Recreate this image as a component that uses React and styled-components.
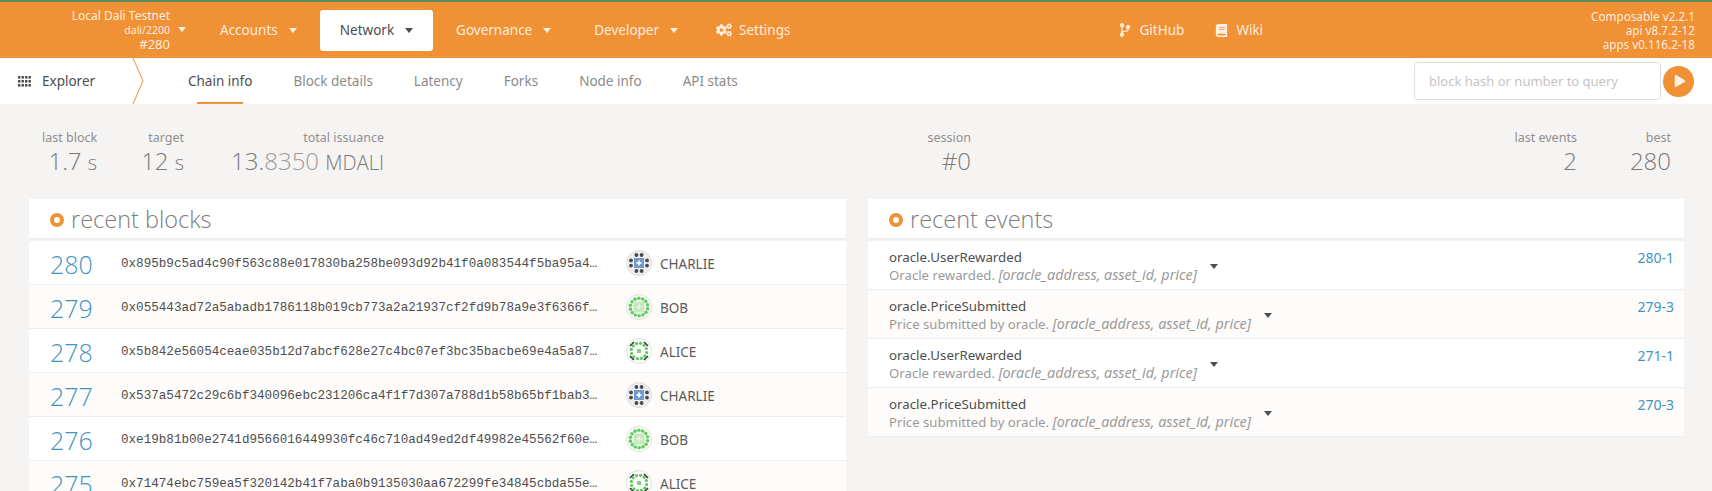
import styled, { createGlobalStyle } from "styled-components";
import { FaBook, FaCodeBranch, FaCogs, FaPlay } from "react-icons/fa";

const GlobalStyle = createGlobalStyle`
  html, body {
    margin: 0;
    padding: 0;
    background: #f5f4f3;
    height: 491px;
    overflow: hidden;
    font-family: "Noto Sans", "Open Sans", sans-serif;
    color: #4e4e4e;
  }
`;

const orange = "#f19135";

const Page = styled.div`
  width: 1712px;
  height: 491px;
  overflow: hidden;
`;

const TopBar = styled.header`
  height: 56px;
  background: ${orange};
  border-top: 2px solid #5d8a5d;
  display: flex;
  align-items: center;
  color: rgba(255, 255, 255, 0.85);
`;

const ChainInfo = styled.div`
  width: 170px;
  text-align: right;
  margin-right: 8px;
  line-height: 14px;
  font-size: 12px;
  color: rgba(255, 255, 255, 0.85);
`;

const ChainSmall = styled.div`
  font-size: 10.5px;
`;

const ChainBlock = styled.div`
  font-size: 13px;
`;

const Caret = styled.span`
  display: inline-block;
  width: 0;
  height: 0;
  border-left: 4.5px solid transparent;
  border-right: 4.5px solid transparent;
  border-top: 5px solid ${(p) => p.$color || "currentColor"};
`;

const NetCaret = styled(Caret)`
  margin-right: 14px;
  margin-top: -2px;
`;

const NavItem = styled.div`
  display: flex;
  align-items: center;
  height: 41px;
  padding: 0 ${(p) => p.$pad || 20}px;
  gap: ${(p) => p.$gap || 11}px;
  font-size: 13.5px;
  border-radius: 3px;
  background: ${(p) => (p.$active ? "#fff" : "transparent")};
  color: ${(p) => (p.$active ? "#4e4e4e" : "inherit")};
`;

const SettingsItem = styled(NavItem)`
  margin-left: -5px;
`;

const NavGroup = styled.div`
  display: flex;
  align-items: center;
  gap: 3px;
`;

const LinkGroup = styled(NavGroup)`
  margin-right: 314px;
`;

const Spacer = styled.div`
  flex: 1;
`;

const Versions = styled.div`
  text-align: right;
  padding-right: 17px;
  font-size: 11.7px;
  line-height: 14px;
  margin-top: -1px;
`;

const SubBar = styled.nav`
  height: 46px;
  background: #fff;
  display: flex;
  align-items: center;
  position: relative;
`;

const Explorer = styled.div`
  width: 132px;
  padding-left: 18px;
  box-sizing: border-box;
  height: 46px;
  display: flex;
  align-items: center;
  gap: 11px;
  font-size: 13.5px;
  position: relative;
`;

const Chevron = styled.svg`
  position: absolute;
  right: -14px;
  top: 0;
`;

const Tabs = styled.div`
  display: flex;
  height: 46px;
  margin-left: 56px;
  gap: 41px;
`;

const Tab = styled.div`
  height: 46px;
  display: flex;
  align-items: center;
  font-size: 13.5px;
  position: relative;
  color: ${(p) => (p.$active ? "#4e4e4e" : "#8b8b8b")};
  &::after {
    content: "";
    display: ${(p) => (p.$active ? "block" : "none")};
    position: absolute;
    left: 9px;
    right: 9px;
    bottom: 0;
    height: 2px;
    background: ${orange};
  }
`;

const QueryBox = styled.div`
  width: 247px;
  height: 38px;
  box-sizing: border-box;
  border: 1px solid #dfdfdf;
  border-radius: 4px;
  display: flex;
  align-items: center;
  padding-left: 14px;
  font-size: 13px;
  color: #c4c4c4;
  margin-right: 2px;
`;

const RunButton = styled.div`
  width: 31px;
  height: 31px;
  border-radius: 50%;
  background: ${orange};
  color: rgba(255, 255, 255, 0.85);
  display: flex;
  align-items: center;
  justify-content: center;
  margin-right: 18px;
  font-size: 12px;
  padding-left: 2px;
  box-sizing: border-box;
`;

const Content = styled.main`
  padding: 0 28px 0 29px;
`;

const Summary = styled.section`
  display: flex;
  height: 95px;
  box-sizing: border-box;
  padding: 26px 13px 0 13px;
`;

const Stat = styled.div`
  text-align: right;
  margin-right: ${(p) => p.$gap || 0}px;
`;

const StatLabel = styled.div`
  font-size: 12.5px;
  line-height: 15px;
  color: #8f8f8f;
`;

const StatValue = styled.div`
  font-size: 24px;
  line-height: 32px;
  font-weight: 300;
  color: #7a7a7a;
  font-family: "Open Sans", sans-serif;
`;

const Unit = styled.span`
  font-size: 20px;
`;

const Dim = styled.span`
  color: #9c9c9c;
`;

const Columns = styled.div`
  display: grid;
  grid-template-columns: 817px 816px;
  gap: 22px;
`;

const TitleCard = styled.div`
  height: 39px;
  background: #fff;
  display: flex;
  align-items: center;
  padding-left: 21px;
  gap: 7px;
  margin-bottom: 3px;
  box-shadow: 0 1px 1px rgba(0, 0, 0, 0.03);
`;

const Dot = styled.span`
  width: 14px;
  height: 14px;
  box-sizing: border-box;
  border-radius: 50%;
  border: 4px solid ${orange};
  background: #fff;
  margin-top: 2px;
`;

const Title = styled.h2`
  margin: 0;
  font-size: 23.5px;
  font-weight: 300;
  color: #7d7d7d;
  font-family: "Open Sans", sans-serif;
`;

const Row = styled.div`
  height: 44px;
  box-sizing: border-box;
  padding-top: 2px;
  background: ${(p) => (p.$odd ? "#fefcfa" : "#fff")};
  border-bottom: 1px solid #eeeeee;
  display: flex;
  align-items: center;
`;

const BlockNumber = styled.div`
  width: 92px;
  padding-left: 21px;
  box-sizing: border-box;
  font-size: 25px;
  font-weight: 300;
  color: #3f94bd;
  font-family: "Open Sans", sans-serif;
`;

const Hash = styled.div`
  width: 480px;
  font-family: "Liberation Mono", monospace;
  font-size: 12.6px;
  color: #4e4e4e;
  white-space: nowrap;
  overflow: hidden;
  text-overflow: ellipsis;
`;

const Author = styled.div`
  margin-left: 25px;
  display: flex;
  align-items: center;
  gap: 8px;
  font-size: 13.5px;
  color: #5a5a5a;
`;

const IdenticonSvg = styled.svg`
  margin-top: -2px;
`;

const EventRow = styled.div`
  height: 49px;
  box-sizing: border-box;
  padding: 2px 10px 0 21px;
  background: ${(p) => (p.$odd ? "#fefcfa" : "#fff")};
  border-bottom: 1px solid #eeeeee;
  display: flex;
  align-items: center;
`;

const EventText = styled.div`
  display: flex;
  flex-direction: column;
`;

const EventName = styled.div`
  font-size: 13.3px;
  line-height: 17px;
  color: #4e4e4e;
`;

const EventDesc = styled.div`
  font-size: 13.2px;
  line-height: 17px;
  color: #9a9a9a;
`;

const EventParams = styled.em`
  font-size: 14.3px;
`;

const EventCaret = styled(Caret)`
  margin-left: 13px;
`;

const EventLink = styled.a`
  margin-left: auto;
  align-self: flex-start;
  margin-top: 5px;
  font-size: 14px;
  color: #3f94bd;
`;

// rough copies of the account identicons: a ring of dots around a centre
function ring(count, radius) {
  return Array.from({ length: count }, (_, i) => {
    const a = (i / count) * Math.PI * 2 + 0.2;
    return [Math.cos(a) * radius, Math.sin(a) * radius];
  });
}

function Identicon({ name }) {
  if (name === "CHARLIE") {
    const dots = [[-2.6, -8], [2.6, -8], [-2.6, 8], [2.6, 8], [-8, -2.6], [-8, 2.6], [8, -2.6], [8, 2.6]];
    return (
      <IdenticonSvg width="26" height="26" viewBox="-13 -13 26 26">
        <circle r="12.5" fill="#eeeeee" stroke="#dedede" />
        {dots.map(([x, y], i) => (
          <circle key={i} cx={x} cy={y} r="1.9" fill="#4a4a4a" />
        ))}
        <rect x="-5" y="-5" width="10" height="10" fill="#6f9bd1" />
        <path d="M0 -3.5 L1 -1 L3.5 0 L1 1 L0 3.5 L-1 1 L-3.5 0 L-1 -1 Z" fill="#fff" />
      </IdenticonSvg>
    );
  }
  if (name === "BOB") {
    return (
      <IdenticonSvg width="26" height="26" viewBox="-13 -13 26 26">
        <circle r="12.5" fill="#fdfdfb" stroke="#dedede" />
        {ring(14, 8.8).map(([x, y], i) => (
          <circle key={i} cx={x} cy={y} r="1.8" fill="#62cc5e" />
        ))}
        <rect x="-5.5" y="-5.5" width="11" height="11" fill="#c6e8c0" />
        <path d="M0 -3.5 L1 -1 L3.5 0 L1 1 L0 3.5 L-1 1 L-3.5 0 L-1 -1 Z" fill="#e6f5e2" />
      </IdenticonSvg>
    );
  }
  return (
    <IdenticonSvg width="26" height="26" viewBox="-13 -13 26 26">
      <circle r="12.5" fill="#fff" stroke="#dedede" />
      <path d="M-9 -5 L-5 -9 M9 -5 L5 -9 M-9 5 L-5 9 M9 5 L5 9" stroke="#333" strokeWidth="1.6" />
      {ring(12, 7.8).map(([x, y], i) => (
        <circle key={i} cx={x} cy={y} r="1.6" fill="#5cc95c" />
      ))}
      <rect x="-2" y="-2" width="4" height="4" fill="#7fd47f" />
    </IdenticonSvg>
  );
}

const blocks = [
  ["280", "0x895b9c5ad4c90f563c88e017830ba258be093d92b41f0a083544f5ba95a4b2", "CHARLIE"],
  ["279", "0x055443ad72a5abadb1786118b019cb773a2a21937cf2fd9b78a9e3f6366f10", "BOB"],
  ["278", "0x5b842e56054ceae035b12d7abcf628e27c4bc07ef3bc35bacbe69e4a5a8712", "ALICE"],
  ["277", "0x537a5472c29c6bf340096ebc231206ca4f1f7d307a788d1b58b65bf1bab310", "CHARLIE"],
  ["276", "0xe19b81b00e2741d9566016449930fc46c710ad49ed2df49982e45562f60e10", "BOB"],
  ["275", "0x71474ebc759ea5f320142b41f7aba0b9135030aa672299fe34845cbda55e10", "ALICE"],
];

const rewarded = ["oracle.UserRewarded", "Oracle rewarded. "];
const submitted = ["oracle.PriceSubmitted", "Price submitted by oracle. "];
const events = [
  [...rewarded, "280-1"],
  [...submitted, "279-3"],
  [...rewarded, "271-1"],
  [...submitted, "270-3"],
];

export default function App() {
  return (
    <Page>
      <GlobalStyle />
      <TopBar>
        <ChainInfo>
          <div>Local Dali Testnet</div>
          <ChainSmall>dali/2200</ChainSmall>
          <ChainBlock>#280</ChainBlock>
        </ChainInfo>
        <NetCaret />
        <NavGroup>
          <NavItem>Accounts <Caret /></NavItem>
          <NavItem $active>Network <Caret $color="#4e4e4e" /></NavItem>
          <NavItem>Governance <Caret /></NavItem>
          <NavItem>Developer <Caret /></NavItem>
          <SettingsItem $gap={7}>
            <FaCogs size={16} />
            Settings
          </SettingsItem>
        </NavGroup>
        <Spacer />
        <LinkGroup>
          <NavItem $pad={14} $gap={8}>
            <FaCodeBranch size={14} />
            GitHub
          </NavItem>
          <NavItem $pad={14} $gap={8}>
            <FaBook size={13} />
            Wiki
          </NavItem>
        </LinkGroup>
        <Versions>
          <div>Composable v2.2.1</div>
          <div>api v8.7.2-12</div>
          <div>apps v0.116.2-18</div>
        </Versions>
      </TopBar>
      <SubBar>
        <Explorer>
          <svg width="13" height="11" viewBox="0 0 13 11" fill="#4e4e4e">
            {[0, 4, 8].map((y) =>
              [0, 3.5, 7, 10.5].map((x) => <rect key={`${x}-${y}`} x={x} y={y} width="2.4" height="2.6" />)
            )}
          </svg>
          Explorer
          <Chevron width="14" height="46" viewBox="0 0 14 46" fill="none" stroke={orange}>
            <path d="M1 0 L11 23 L1 46" />
          </Chevron>
        </Explorer>
        <Tabs>
          <Tab $active>Chain info</Tab>
          <Tab>Block details</Tab>
          <Tab>Latency</Tab>
          <Tab>Forks</Tab>
          <Tab>Node info</Tab>
          <Tab>API stats</Tab>
        </Tabs>
        <Spacer />
        <QueryBox>block hash or number to query</QueryBox>
        <RunButton>
          <FaPlay />
        </RunButton>
      </SubBar>
      <Content>
        <Summary>
          <Stat $gap={44}>
            <StatLabel>last block</StatLabel>
            <StatValue>1.7 <Unit>s</Unit></StatValue>
          </Stat>
          <Stat $gap={47}>
            <StatLabel>target</StatLabel>
            <StatValue>12 <Unit>s</Unit></StatValue>
          </Stat>
          <Stat>
            <StatLabel>total issuance</StatLabel>
            <StatValue>13.<Dim>8350</Dim> <Unit>MDALI</Unit></StatValue>
          </Stat>
          <Spacer />
          <Stat>
            <StatLabel>session</StatLabel>
            <StatValue>#0</StatValue>
          </Stat>
          <Spacer />
          <Stat $gap={53}>
            <StatLabel>last events</StatLabel>
            <StatValue>2</StatValue>
          </Stat>
          <Stat>
            <StatLabel>best</StatLabel>
            <StatValue>280</StatValue>
          </Stat>
        </Summary>
        <Columns>
          <div>
            <TitleCard>
              <Dot />
              <Title>recent blocks</Title>
            </TitleCard>
            {blocks.map(([num, hash, author], i) => (
              <Row key={num} $odd={i % 2 === 1}>
                <BlockNumber>{num}</BlockNumber>
                <Hash>{hash}</Hash>
                <Author>
                  <Identicon name={author} />
                  {author}
                </Author>
              </Row>
            ))}
          </div>
          <div>
            <TitleCard>
              <Dot />
              <Title>recent events</Title>
            </TitleCard>
            {events.map(([name, desc, link], i) => (
              <EventRow key={link} $odd={i % 2 === 1}>
                <EventText>
                  <EventName>{name}</EventName>
                  <EventDesc>
                    {desc}
                    <EventParams>[oracle_address, asset_id, price]</EventParams>
                  </EventDesc>
                </EventText>
                <EventCaret $color="#4e4e4e" />
                <EventLink>{link}</EventLink>
              </EventRow>
            ))}
          </div>
        </Columns>
      </Content>
    </Page>
  );
}
